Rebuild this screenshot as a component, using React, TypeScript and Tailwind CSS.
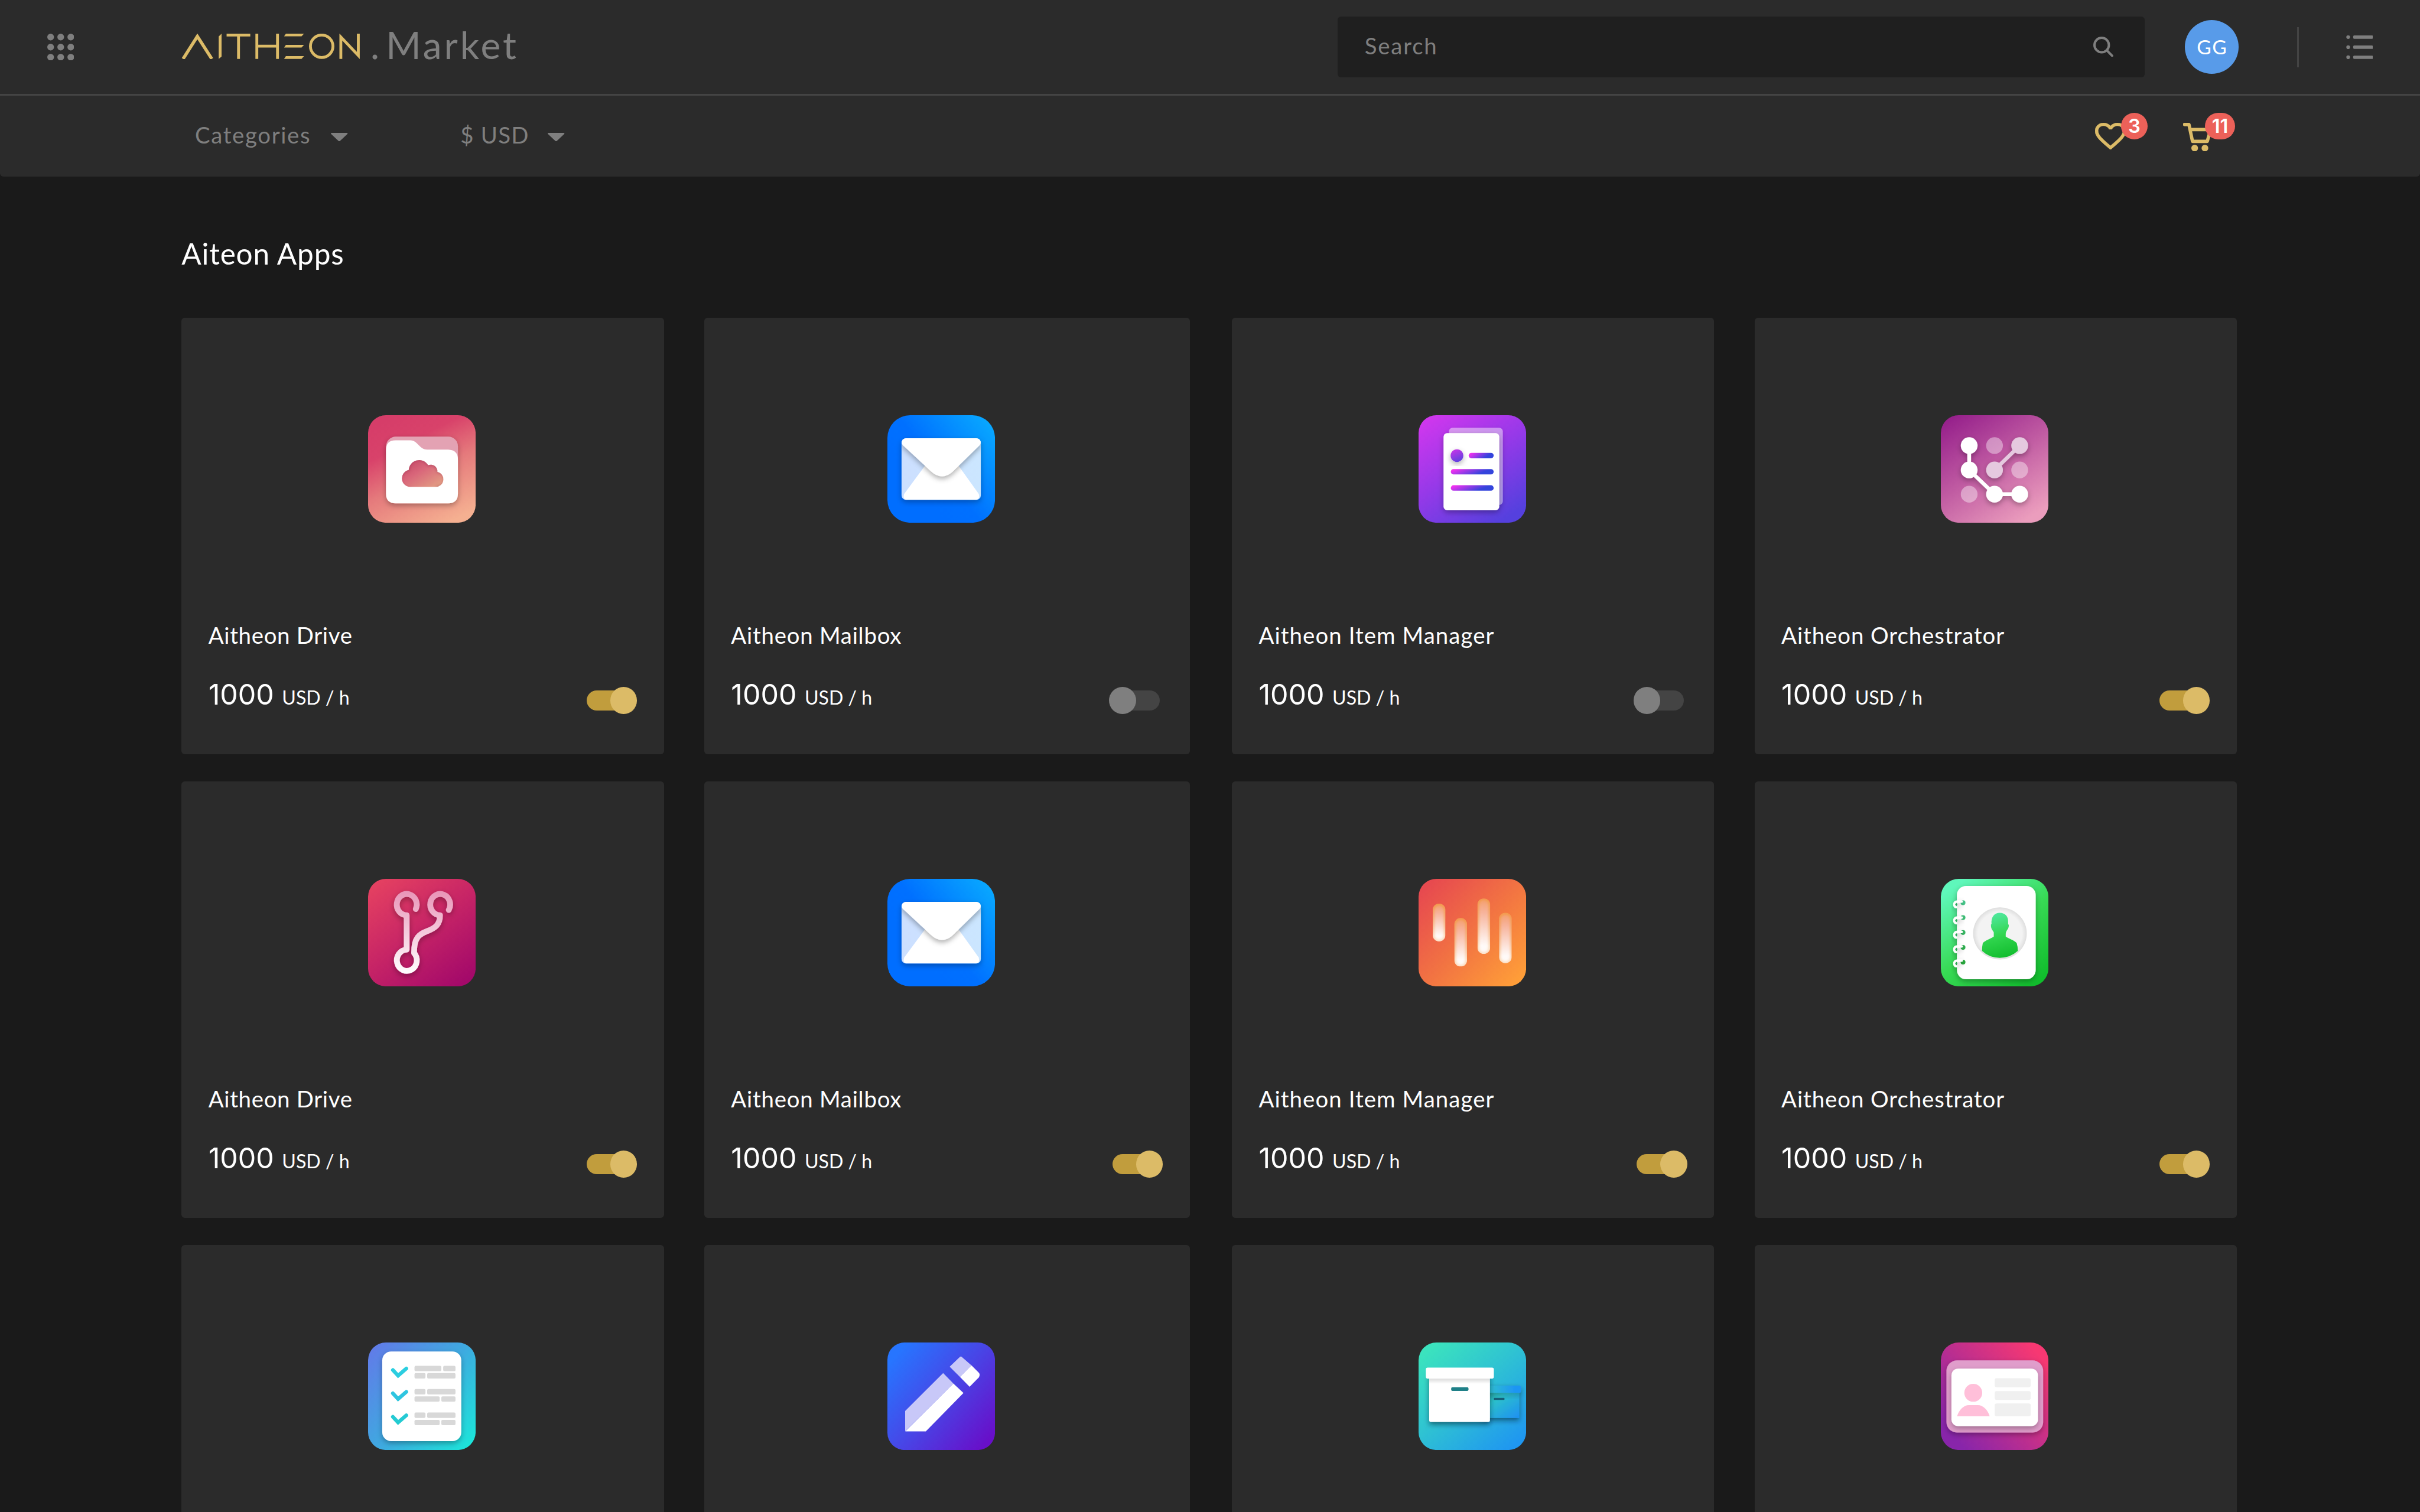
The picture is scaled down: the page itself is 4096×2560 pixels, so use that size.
import type { ReactNode } from "react";

/* ---------- App tiles ---------- */

type TileProps = {
  id: string;
  x: number;
  y: number;
  r?: number;
  from: [number, number];
  to: [number, number];
  stops: [number, string][];
  children: ReactNode;
};

function Tile({ id, x, y, r = 96, from, to, stops, children }: TileProps) {
  return (
    <svg viewBox={`${x} ${y} 577 577`} className="size-16">
      <defs>
        <linearGradient id={`${id}-bg`} x1={from[0]} y1={from[1]} x2={to[0]} y2={to[1]}>
          {stops.map(([o, c]) => (
            <stop key={o} offset={o} stopColor={c} />
          ))}
        </linearGradient>
        <filter id={`${id}-shadow`} x="-30%" y="-30%" width="160%" height="160%">
          <feDropShadow dx="0" dy="12" stdDeviation="16" floodColor="#000" floodOpacity="0.3" />
        </filter>
      </defs>
      <rect x={x} y={y} width="577" height="577" rx={r} fill={`url(#${id}-bg)`} />
      {children}
    </svg>
  );
}

function DriveIcon() {
  return (
    <Tile id="drive" x={111} y={123} from={[0.25, 0]} to={[0.75, 1]} stops={[[0, "#d63d69"], [0.25, "#d8426a"], [0.55, "#e57a7c"], [1, "#f5b091"]]}>
      <defs>
        <linearGradient id="drive-cloud" x1="0.1" y1="0" x2="0.9" y2="0.9">
          <stop offset="0" stopColor="#bf3f60" />
          <stop offset="0.45" stopColor="#d9667a" />
          <stop offset="1" stopColor="#e3a184" />
        </linearGradient>
        <clipPath id="drive-cloud-clip">
          <path d="M340 508A46 46 0 0 1 329 417A56 56 0 0 1 433 391A36 36 0 0 1 483 427A41 41 0 0 1 473 508Z" />
        </clipPath>
        <filter id="drive-blur"><feGaussianBlur stdDeviation="9" /></filter>
      </defs>
      <g filter="url(#drive-shadow)">
        <rect x="208" y="238" width="385" height="200" rx="52" fill="#e3a2b3" />
        <path d="M207 310Q207 258 259 258H338C378 258 385 308 428 308H541Q593 310 593 360V544Q593 596 541 596H259Q207 596 207 544Z" fill="#fff" />
      </g>
      <g clipPath="url(#drive-cloud-clip)">
        <rect x="280" y="350" width="250" height="170" fill="url(#drive-cloud)" />
        <path d="M345 520A50 50 0 0 1 325 414A58 58 0 0 1 435 388A38 38 0 0 1 487 424A43 43 0 0 1 478 512" fill="none" stroke="#7a2040" strokeOpacity="0.45" strokeWidth="12" filter="url(#drive-blur)" />
      </g>
    </Tile>
  );
}

function MailIcon() {
  return (
    <Tile id="mail" x={132} y={123} r={122} from={[0.3, 0.7]} to={[1, 0.15]} stops={[[0, "#006eff"], [0.3, "#0070ff"], [1, "#08a6ff"]]}>
      <defs>
        <clipPath id="mail-clip"><rect x="208" y="247" width="425" height="330" rx="24" /></clipPath>
        <linearGradient id="mail-side" x1="0" y1="0" x2="1" y2="0">
          <stop offset="0" stopColor="#ccdfff" />
          <stop offset="1" stopColor="#cbe6ff" />
        </linearGradient>
        <filter id="mail-flap" x="-20%" y="-20%" width="140%" height="150%">
          <feDropShadow dx="0" dy="14" stdDeviation="14" floodColor="#000" floodOpacity="0.3" />
        </filter>
      </defs>
      <rect x="208" y="247" width="425" height="330" rx="24" fill="url(#mail-side)" filter="url(#mail-shadow)" />
      <g clipPath="url(#mail-clip)">
        <path d="M425 270L222 545Q212 577 238 577H605Q630 575 622 545Z" fill="#fff" />
        <path d="M230 247H611Q633 247 633 268Q633 276 627 284L484 424Q425 478 366 424L215 284Q208 276 208 268Q208 247 230 247Z" fill="#fff" filter="url(#mail-flap)" />
      </g>
    </Tile>
  );
}

function ItemIcon() {
  return (
    <Tile id="item" x={127} y={123} from={[0.1, 0]} to={[0.75, 1]} stops={[[0, "#d137ee"], [0.5, "#9539e8"], [1, "#5540de"]]}>
      <defs>
        <linearGradient id="item-line" x1="0" y1="0" x2="1" y2="0.3">
          <stop offset="0.1" stopColor="#f230f0" />
          <stop offset="0.85" stopColor="#3444dc" />
        </linearGradient>
        <linearGradient id="item-dot" x1="0.3" y1="0" x2="0.7" y2="1">
          <stop offset="0" stopColor="#c535e8" />
          <stop offset="1" stopColor="#5a42de" />
        </linearGradient>
      </defs>
      <rect x="290" y="190" width="289" height="414" rx="20" fill="#fff" fillOpacity="0.45" filter="url(#item-shadow)" />
      <rect x="261" y="219" width="299" height="414" rx="20" fill="#fff" filter="url(#item-shadow)" />
      <circle cx="333" cy="340" r="34" fill="url(#item-dot)" filter="url(#item-shadow)" />
      <rect x="396" y="325" width="134" height="29" rx="14.5" fill="url(#item-line)" />
      <rect x="300" y="412" width="230" height="29" rx="14.5" fill="url(#item-line)" />
      <rect x="300" y="499" width="230" height="29" rx="14.5" fill="url(#item-line)" />
    </Tile>
  );
}

function OrchestratorIcon() {
  return (
    <Tile id="orch" x={136} y={123} from={[0.1, 0]} to={[0.75, 1]} stops={[[0, "#951f8b"], [0.5, "#c05ba2"], [1, "#eb9dbd"]]}>
      <g fill="#fff" fillOpacity="0.4">
        <circle cx="424" cy="286" r="45" />
        <circle cx="559" cy="417" r="45" />
        <circle cx="288" cy="547" r="45" />
      </g>
      <g fill="#e5c9df" stroke="#e5c9df" filter="url(#orch-shadow)">
        <path d="M559 286L424 417" strokeWidth="20" />
        <circle cx="559" cy="286" r="45" stroke="none" />
        <circle cx="424" cy="417" r="45" stroke="none" />
      </g>
      <g fill="#fff" filter="url(#orch-shadow)">
        <path d="M288 286V417L424 547H559" fill="none" stroke="#fff" strokeWidth="20" />
        <circle cx="288" cy="286" r="45" />
        <circle cx="288" cy="417" r="45" />
        <circle cx="424" cy="547" r="45" />
        <circle cx="559" cy="547" r="45" />
      </g>
    </Tile>
  );
}

function BranchIcon() {
  return (
    <Tile id="branch" x={111} y={117} from={[0.1, 0]} to={[0.85, 1]} stops={[[0, "#e54161"], [0.5, "#c62466"], [1, "#a3096a"]]}>
      <defs>
        <linearGradient id="branch-line" gradientUnits="userSpaceOnUse" x1="0" y1="183" x2="0" y2="626">
          <stop offset="0" stopColor="#e995b8" />
          <stop offset="1" stopColor="#fff" />
        </linearGradient>
      </defs>
      <path
        d="M367 279A53.5 57 0 1 0 318 312V497A53.5 57 0 1 0 358 515C356 430 388 413 427 398C472 381 497 362 497 312A53.5 57 0 1 1 544 284"
        fill="none"
        stroke="url(#branch-line)"
        strokeWidth="31"
        strokeLinecap="round"
        strokeLinejoin="round"
        filter="url(#branch-shadow)"
      />
    </Tile>
  );
}

const soundBars = [
  [202, 250, 203],
  [318, 327, 261],
  [442, 222, 298],
  [558, 299, 271],
];

function BarsIcon() {
  return (
    <Tile id="bars" x={126} y={117} from={[0.05, 0.1]} to={[0.95, 0.95]} stops={[[0, "#e74a4f"], [0.5, "#f27442"], [1, "#ff9f38"]]}>
      <defs>
        <linearGradient id="bars-fill" x1="0" y1="0" x2="0" y2="1">
          <stop offset="0" stopColor="#f49d6a" />
          <stop offset="0.25" stopColor="#f7b39b" />
          <stop offset="0.85" stopColor="#fffaf8" />
        </linearGradient>
        <linearGradient id="bars-edge" x1="0" y1="0" x2="0" y2="1">
          <stop offset="0" stopColor="#f29a40" />
          <stop offset="1" stopColor="#f29a40" stopOpacity="0.35" />
        </linearGradient>
        <clipPath id="bars-clip">
          {soundBars.map(([x, y, h]) => (
            <rect key={x} x={x} y={y} width="68" height={h} rx="34" />
          ))}
        </clipPath>
        <filter id="bars-blur"><feGaussianBlur stdDeviation="6" /></filter>
      </defs>
      <g clipPath="url(#bars-clip)">
        {soundBars.map(([x, y, h]) => (
          <g key={x}>
            <rect x={x} y={y} width="68" height={h} fill="url(#bars-fill)" />
            <rect x={x} y={y} width="68" height={h} rx="34" fill="none" stroke="url(#bars-edge)" strokeWidth="14" filter="url(#bars-blur)" />
          </g>
        ))}
      </g>
    </Tile>
  );
}

const binderRings = [
  [239, 245],
  [325, 325],
  [402, 405],
  [480, 485],
  [556, 564],
];

function ContactsIcon() {
  return (
    <Tile id="contacts" x={136} y={117} from={[0.15, 0.05]} to={[0.85, 1]} stops={[[0, "#5ff7bb"], [0.5, "#38da55"], [1, "#10bd2c"]]}>
      <defs>
        <linearGradient id="contacts-person" x1="0.4" y1="0" x2="0.6" y2="1">
          <stop offset="0" stopColor="#50e8a0" />
          <stop offset="0.5" stopColor="#32d650" />
          <stop offset="1" stopColor="#12bd2e" />
        </linearGradient>
        <linearGradient id="contacts-hole" gradientUnits="userSpaceOnUse" x1="0" y1="240" x2="0" y2="570">
          <stop offset="0" stopColor="#48c78c" />
          <stop offset="1" stopColor="#28a83c" />
        </linearGradient>
        <radialGradient id="contacts-disc">
          <stop offset="0.82" stopColor="#f3f3f3" />
          <stop offset="1" stopColor="#dedede" />
        </radialGradient>
      </defs>
      <rect x="222" y="155" width="423" height="501" rx="50" fill="#fff" filter="url(#contacts-shadow)" />
      <ellipse cx="453" cy="410" rx="144" ry="140" fill="url(#contacts-disc)" />
      <path d="M452 299C482 299 498 320 497 345V361Q502 362 500 373Q497 388 492 390Q484 402 484 412V427C500 437 530 447 543 462Q549 480 549 504Q508 541 452 541Q396 541 357 504Q357 480 361 462C375 447 405 437 420 427V405Q417 397 411 390Q404 380 405 361H408C404 320 424 299 452 299Z" fill="url(#contacts-person)" />
      {binderRings.map(([, h]) => (
        <circle key={h} cx="255" cy={h} r="13" fill="url(#contacts-hole)" />
      ))}
      <g fill="none" stroke="#fff" strokeWidth="13" strokeLinecap="round" filter="url(#contacts-shadow)">
        {binderRings.map(([y]) => (
          <path key={y} d={`M248 ${y}H222C204 ${y} 204 ${y + 28} 218 ${y + 30}`} />
        ))}
      </g>
      {binderRings.map(([y]) => (
        <circle key={y} cx="219" cy={y + 15} r="5" fill="#27a557" />
      ))}
    </Tile>
  );
}

const checkRows = [
  { y: 236, bars: [[361, 144, 0], [515, 66, 0], [361, 59, 39], [429, 152, 39]] },
  { y: 361, bars: [[361, 59, 0], [429, 152, 0], [361, 135, 39], [505, 76, 39]] },
  { y: 487, bars: [[361, 59, 0], [429, 152, 0], [361, 135, 39], [505, 76, 39]] },
];

function ChecklistIcon() {
  return (
    <Tile id="check" x={112} y={111} from={[0, 0.1]} to={[1, 0.95]} stops={[[0, "#607ce8"], [0.5, "#3eaae0"], [1, "#1ae8da"]]}>
      <defs>
        <linearGradient id="check-tick" gradientUnits="userSpaceOnUse" x1="0" y1="240" x2="0" y2="550">
          <stop offset="0" stopColor="#2bd0e0" />
          <stop offset="0.5" stopColor="#2fc4e0" />
          <stop offset="1" stopColor="#22ccd0" />
        </linearGradient>
      </defs>
      <rect x="188" y="159" width="424" height="481" rx="48" fill="#fff" filter="url(#check-shadow)" />
      {checkRows.map((row) => (
        <g key={row.y}>
          <path d={`M245 ${row.y + 23}L273 ${row.y + 53}L317 ${row.y + 15}`} fill="none" stroke="url(#check-tick)" strokeWidth="20" strokeLinecap="round" />
          {row.bars.map(([x, w, dy]) => (
            <rect key={`${x}-${dy}`} x={x} y={row.y + dy} width={w} height="29" rx="7" fill="#d8d8d8" />
          ))}
        </g>
      ))}
    </Tile>
  );
}

function PenIcon() {
  return (
    <Tile id="pen" x={0} y={0} r={92} from={[0.05, 0.15]} to={[0.95, 0.9]} stops={[[0, "#2775ff"], [0.5, "#4845e6"], [1, "#680fc9"]]}>
      <path d="M299 164L95 368V477L354 220Z" fill="#c8c8f8" />
      <path d="M354 220L408 271L206 477H96Z" fill="#fff" />
      <path d="M387 79Q394 71 401 79L451 123L389 185L334 130Z" fill="#c8c8f8" />
      <path d="M451 123L490 162Q500 172 490 188L441 238L389 185Z" fill="#fff" />
    </Tile>
  );
}

function ArchiveIcon() {
  return (
    <Tile id="archive" x={0} y={0} from={[0.1, 0.05]} to={[0.9, 0.95]} stops={[[0, "#3be3be"], [0.45, "#2fc3d2"], [1, "#1f97f0"]]}>
      <defs>
        <linearGradient id="archive-lid" x1="0" y1="0" x2="0.85" y2="0">
          <stop offset="0.1" stopColor="#33c5cc" />
          <stop offset="1" stopColor="#1e95f3" />
        </linearGradient>
        <linearGradient id="archive-box" x1="0" y1="0" x2="1" y2="1">
          <stop offset="0.1" stopColor="#28b0a8" />
          <stop offset="0.35" stopColor="#2cc0cc" />
          <stop offset="1" stopColor="#1e90f2" />
        </linearGradient>
        <linearGradient id="archive-shade" x1="0" y1="0" x2="0" y2="1">
          <stop offset="0" stopColor="#000" stopOpacity="0.16" />
          <stop offset="1" stopColor="#000" stopOpacity="0" />
        </linearGradient>
        <filter id="archive-deep" x="-20%" y="-20%" width="140%" height="150%">
          <feDropShadow dx="0" dy="14" stdDeviation="14" floodColor="#00222e" floodOpacity="0.55" />
        </filter>
      </defs>
      <g filter="url(#archive-deep)">
        <rect x="340" y="262" width="200" height="143" fill="url(#archive-box)" />
        <rect x="340" y="270" width="200" height="36" fill="url(#archive-shade)" />
        <rect x="340" y="231" width="209" height="39" rx="9" fill="url(#archive-lid)" />
      </g>
      <rect x="404" y="297" width="57" height="11" rx="3" fill="#165e78" />
      <g filter="url(#archive-deep)">
        <path d="M57 160H383V417Q383 426 374 426H66Q57 426 57 417Z" fill="#fff" />
      </g>
      <rect x="57" y="190" width="326" height="32" fill="url(#archive-shade)" />
      <rect x="39" y="135" width="365" height="59" rx="10" fill="#fff" />
      <rect x="175" y="240" width="93" height="20" rx="7" fill="#1f8088" />
    </Tile>
  );
}

function IdCardIcon() {
  return (
    <Tile id="idcard" x={0} y={0} from={[0.1, 0.85]} to={[0.95, 0.15]} stops={[[0, "#8825aa"], [0.5, "#c12f8c"], [1, "#f73872"]]}>
      <rect x="30" y="96" width="519" height="387" rx="56" fill="#e09dcb" filter="url(#idcard-shadow)" />
      <rect x="57" y="140" width="464" height="309" rx="36" fill="#fff" filter="url(#idcard-shadow)" />
      <circle cx="174" cy="270" r="48" fill="#ffbfd9" />
      <path d="M87 396C97 362 122 336 151 336H198C227 336 252 362 262 396Z" fill="#ffbfd9" />
      <g fill="#f0f0f0">
        <rect x="289" y="192" width="193" height="48" rx="10" />
        <rect x="289" y="261" width="193" height="47" rx="10" />
        <rect x="289" y="327" width="193" height="69" rx="10" />
      </g>
    </Tile>
  );
}

/* ---------- Header icons ---------- */

function DotsIcon() {
  return (
    <svg viewBox="0 0 16 16" className="ml-7 h-4 w-4 text-[#7f7f7f]" fill="currentColor">
      {[2, 8, 14].map((cy) => [2, 8, 14].map((cx) => <circle key={`${cx}-${cy}`} cx={cx} cy={cy} r="2" />))}
    </svg>
  );
}

function Logo() {
  return (
    <svg viewBox="108 20 106.2 15" className="mb-px ml-16 h-[15px] w-[106.2px]" fill="none" stroke="#dcbb67" strokeWidth="1.7">
      <path d="M109 35L117.5 21.6L126.1 35" strokeWidth="1.9" />
      <path d="M130.2 35V21.7L131.9 20V33.6Z" fill="#dcbb67" stroke="none" />
      <path d="M134.9 20.8H149M142 20.8V35" />
      <path d="M152.9 20V35M165.2 20V35M152.9 27.4H165.2" />
      <path d="M170.2 20H181L179.5 21.6H169.1ZM170.2 26.7H181L179.5 28.3H169.1ZM170.2 33.4H181L179.5 35H169.1Z" fill="#dcbb67" stroke="none" />
      <ellipse cx="191.5" cy="27.5" rx="6.7" ry="6.7" />
      <path d="M202.9 35V22L213.3 33V20" strokeMiterlimit="10" />
    </svg>
  );
}

function SearchIcon() {
  return (
    <svg viewBox="0 0 12 12" className="mr-[18.6px] mb-[0.6px] size-3" fill="none" stroke="#7f7f7f" strokeWidth="1.4" strokeLinecap="round">
      <circle cx="5" cy="5" r="4.3" />
      <path d="M8.2 8.3L11.2 11.4" />
    </svg>
  );
}

function ListIcon() {
  return (
    <svg viewBox="0 0 16 14" className="ml-7 h-3.5 w-4" fill="#7f7f7f">
      {[0, 6, 12].map((y) => (
        <g key={y}>
          <circle cx="1.2" cy={y + 1} r="1.1" />
          <rect x="4.2" y={y} width="11.8" height="2" rx="0.6" />
        </g>
      ))}
    </svg>
  );
}

function Caret() {
  return (
    <svg viewBox="0 0 10 5" className="mt-px h-[5px] w-2.5" fill="#7f7f7f">
      <path d="M0.3 0H9.7Q10.2 0.2 9.8 0.7L5.4 4.8Q5 5.1 4.6 4.8L0.2 0.7Q-0.2 0.2 0.3 0Z" />
    </svg>
  );
}

function HeartIcon() {
  return (
    <svg viewBox="2 3 20 18.35" preserveAspectRatio="none" className="h-4 w-[18.4px]" fill="#dcbb67" stroke="#dcbb67" strokeWidth="0.2">
      <path d="M16.5 3c-1.74 0-3.41.81-4.5 2.09C10.91 3.81 9.24 3 7.5 3 4.42 3 2 5.42 2 8.5c0 3.78 3.4 6.86 8.55 11.54L12 21.35l1.45-1.32C18.6 15.36 22 12.28 22 8.5 22 5.42 19.58 3 16.5 3zm-4.4 15.55l-.1.1-.1-.1C7.14 14.24 4 11.39 4 8.5 4 6.5 5.5 5 7.5 5c1.54 0 3.04.99 3.57 2.36h1.87C13.46 5.99 14.96 5 16.5 5c2 0 3.5 1.5 3.5 3.5 0 2.89-3.14 5.74-7.9 10.05z" />
    </svg>
  );
}

function CartIcon() {
  return (
    <svg viewBox="0 0 18 17" className="h-[17px] w-[18px]" fill="none" stroke="#dcbb67" strokeLinejoin="round">
      <path d="M0.9 1H3.5L5.6 11H14.4L16.4 4H5" strokeLinecap="round" strokeWidth="2" />
      <circle cx="6.9" cy="15" r="2" fill="#dcbb67" stroke="none" />
      <circle cx="13" cy="15" r="2" fill="#dcbb67" stroke="none" />
    </svg>
  );
}

/* ---------- Cards ---------- */

function Toggle({ on }: { on: boolean }) {
  return on ? (
    <div className="mt-[8.2px] flex h-4 w-[30px] items-center">
      <div className="h-3 w-7 rounded-full bg-[#c19d3d]" />
      <div className="-ml-3.5 size-4 shrink-0 rounded-full bg-[#dcbb67]" />
    </div>
  ) : (
    <div className="mt-[8.2px] mr-0.5 flex h-4 w-[30px] items-center">
      <div className="z-10 size-4 shrink-0 rounded-full bg-[#7f7f7f]" />
      <div className="-ml-3.5 h-3 w-7 shrink-0 rounded-full bg-[#444444]" />
    </div>
  );
}

type Product = { name: string; tracking: string; icon: ReactNode; on: boolean };

const drive = { name: "Aitheon Drive", tracking: "tracking-[0.24px]" };
const mailbox = { name: "Aitheon Mailbox", tracking: "tracking-[0.27px]" };
const itemManager = { name: "Aitheon Item Manager", tracking: "tracking-[0.38px]" };
const orchestrator = { name: "Aitheon Orchestrator", tracking: "tracking-[0.33px]" };

const products: Product[] = [
  { ...drive, icon: <DriveIcon />, on: true },
  { ...mailbox, icon: <MailIcon />, on: false },
  { ...itemManager, icon: <ItemIcon />, on: false },
  { ...orchestrator, icon: <OrchestratorIcon />, on: true },
  { ...drive, icon: <BranchIcon />, on: true },
  { ...mailbox, icon: <MailIcon />, on: true },
  { ...itemManager, icon: <BarsIcon />, on: true },
  { ...orchestrator, icon: <ContactsIcon />, on: true },
];

const previews: ReactNode[] = [<ChecklistIcon />, <PenIcon />, <ArchiveIcon />, <IdCardIcon />];

function Card({ icon, wide, children }: { icon: ReactNode; wide: boolean; children?: ReactNode }) {
  return (
    <article className={`flex h-[260px] flex-col rounded-xs bg-[#2b2b2b] px-4 pt-[58px] ${wide ? "w-[289px]" : "w-[287px]"}`}>
      <div className={wide ? "ml-[93px]" : "ml-[95px]"}>{icon}</div>
      {children}
    </article>
  );
}

function Details({ product }: { product: Product }) {
  return (
    <>
      <h2 className={`mt-[57.2px] text-[13.5px] leading-5 ${product.tracking}`}>{product.name}</h2>
      <div className="mt-[12.6px] flex items-start justify-between">
        <p className="mt-[0.6px] flex items-baseline leading-6">
          <span className="w-[43.8px] font-[Inter,sans-serif] text-[17px]">1000</span>
          <span className="text-[11.3px]">USD / h</span>
        </p>
        <Toggle on={product.on} />
      </div>
    </>
  );
}

export default function App() {
  return (
    <div className="h-[900px] w-[1440px] overflow-hidden bg-[#1a1a1a] font-[Lato,sans-serif] text-white [zoom:2.84444]">
      <header className="rounded-b-xs bg-[#2b2b2b] text-[#7f7f7f]">
        <div className="flex h-14 items-center pr-7">
          <DotsIcon />
          <Logo />
          <div className="ml-[6.2px] flex pb-[2.4px] text-[22.5px] leading-7">
            <span className="w-[9.3px]">.</span>
            <span className="tracking-[1.4px]">Market</span>
          </div>
          <div className="ml-auto flex h-9 w-[480px] items-center justify-between rounded-xs bg-[#1f1f1f] pl-4">
            <span className="pb-[1.2px] text-[13.5px] tracking-[0.64px]">Search</span>
            <SearchIcon />
          </div>
          <div className="ml-6 flex size-8 items-center justify-center rounded-full bg-[#589be9] pl-[0.6px] text-[11.8px] tracking-[0.5px] text-white">
            GG
          </div>
          <div className="ml-[35px] h-6 w-px bg-[#444444]" />
          <ListIcon />
        </div>
        <div className="h-px bg-[#444444]" />
        <div className="flex h-12 items-center text-[13.5px]">
          <div className="ml-[116px] flex w-[91px] items-center justify-between">
            <span className="pb-[1.2px] tracking-[0.58px]">Categories</span>
            <Caret />
          </div>
          <div className="ml-[67px] flex w-[62px] items-center justify-between">
            <span className="pb-[1.2px] tracking-[0.42px]">$ USD</span>
            <Caret />
          </div>
          <div className="relative mr-[33.8px] ml-auto">
            <HeartIcon />
            <span className="absolute -top-1.5 left-[15.2px] flex size-4 items-center justify-center rounded-full bg-[#ec6159] font-[Inter,sans-serif] text-[11.5px] font-semibold text-white">
              3
            </span>
          </div>
          <div className="relative mt-px mr-[123px]">
            <CartIcon />
            <span className="absolute -top-1.5 left-[13px] flex h-4 w-[18px] items-center justify-center rounded-full bg-[#ec6159] font-[Inter,sans-serif] text-[11.5px] font-semibold text-white">
              11
            </span>
          </div>
        </div>
      </header>
      <main className="px-[108px]">
        <h1 className="h-21 pt-[33.9px] text-[17.4px] leading-6 tracking-[0.3px]">Aiteon Apps</h1>
        <div className="grid grid-cols-[287px_290px_287px_287px] gap-x-6 gap-y-4">
          {products.map((product, i) => (
            <Card key={i} icon={product.icon} wide={i % 4 === 1}>
              <Details product={product} />
            </Card>
          ))}
          {previews.map((icon, i) => (
            <Card key={i} icon={icon} wide={i === 1} />
          ))}
        </div>
      </main>
    </div>
  );
}
